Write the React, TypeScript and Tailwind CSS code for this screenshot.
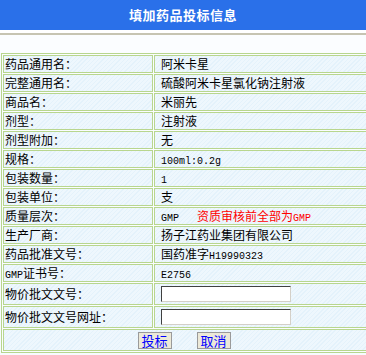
import React from "react";

const M = ({ children }: { children: React.ReactNode }) => (
  <span className="font-['Liberation_Mono',monospace] text-[10px]">{children}</span>
);

const cellBg =
  "bg-[repeating-linear-gradient(135deg,#e4f2fb_0px,#e4f2fb_1px,#eef7fd_1px,#eef7fd_3px)]";
const td = `border border-[#b8d68e] p-0 ${cellBg}`;

type Row = { label: React.ReactNode; value: React.ReactNode };

const rows: Row[] = [
  { label: "药品通用名：", value: "阿米卡星" },
  { label: "完整通用名：", value: "硫酸阿米卡星氯化钠注射液" },
  { label: "商品名：", value: "米丽先" },
  { label: "剂型：", value: "注射液" },
  { label: "剂型附加：", value: "无" },
  { label: "规格：", value: <M>100ml:0.2g</M> },
  { label: "包装数量：", value: <M>1</M> },
  { label: "包装单位：", value: "支" },
  {
    label: "质量层次：",
    value: (
      <>
        <M>GMP</M>
        <span className="ml-[18px] text-[#ff0000]">
          资质审核前全部为<M>GMP</M>
        </span>
      </>
    ),
  },
  { label: "生产厂商：", value: "扬子江药业集团有限公司" },
  {
    label: "药品批准文号：",
    value: (
      <>
        国药准字<M>H19990323</M>
      </>
    ),
  },
  {
    label: (
      <>
        <M>GMP</M>证书号：
      </>
    ),
    value: <M>E2756</M>,
  },
];

export default function App() {
  return (
    <div className="w-[366px] h-[355px] overflow-hidden bg-[#f7fbfe] font-['Noto_Sans_CJK_SC','Noto_Sans',sans-serif] text-[12px] text-black">
      <div className="h-[30px] bg-[#2a70e9] flex items-center justify-center">
        <span className="text-white font-bold text-[13px] tracking-[0.5px]">填加药品投标信息</span>
      </div>
      <div className="h-[3px] bg-white" />
      <div className="h-[2px] bg-[#c6c4b2]" />
      <div className="h-[18px] bg-[#fbfdff]" />
      <table className="ml-px w-[372px] border border-[#b8d68e] border-separate border-spacing-px bg-[#fafdff] table-fixed">
        <colgroup>
          <col className="w-[150px]" />
          <col />
        </colgroup>
        <tbody>
          {rows.map((r, i) => (
            <tr key={i}>
              <td className={td}>
                <div className="h-4 leading-4 pl-px whitespace-nowrap">{r.label}</div>
              </td>
              <td className={td}>
                <div className="h-4 leading-4 pl-[6px] whitespace-nowrap">{r.value}</div>
              </td>
            </tr>
          ))}
          {["物价批文文号：", "物价批文文号网址："].map((l) => (
            <tr key={l}>
              <td className={td}>
                <div className="h-5 leading-5 pl-px whitespace-nowrap">{l}</div>
              </td>
              <td className={td}>
                <div className="h-5 pl-[6px] flex items-center">
                  <input
                    type="text"
                    className="w-[130px] h-4 bg-white border border-t-[#404040] border-l-[#404040] border-r-[#d4d0c8] border-b-[#d4d0c8] outline-none"
                  />
                </div>
              </td>
            </tr>
          ))}
          <tr>
            <td colSpan={2} className={td}>
              <div className="h-5 flex items-center justify-center gap-[25px] pr-[6px]">
                <button className="w-[34px] h-[17px] bg-[#ece9d8] border border-[#9a9a9a] text-[#0000ff] text-[13px] leading-[15px]">
                  投标
                </button>
                <button className="w-[34px] h-[17px] bg-[#ece9d8] border border-[#9a9a9a] text-[#0000ff] text-[13px] leading-[15px]">
                  取消
                </button>
              </div>
            </td>
          </tr>
        </tbody>
      </table>
    </div>
  );
}
